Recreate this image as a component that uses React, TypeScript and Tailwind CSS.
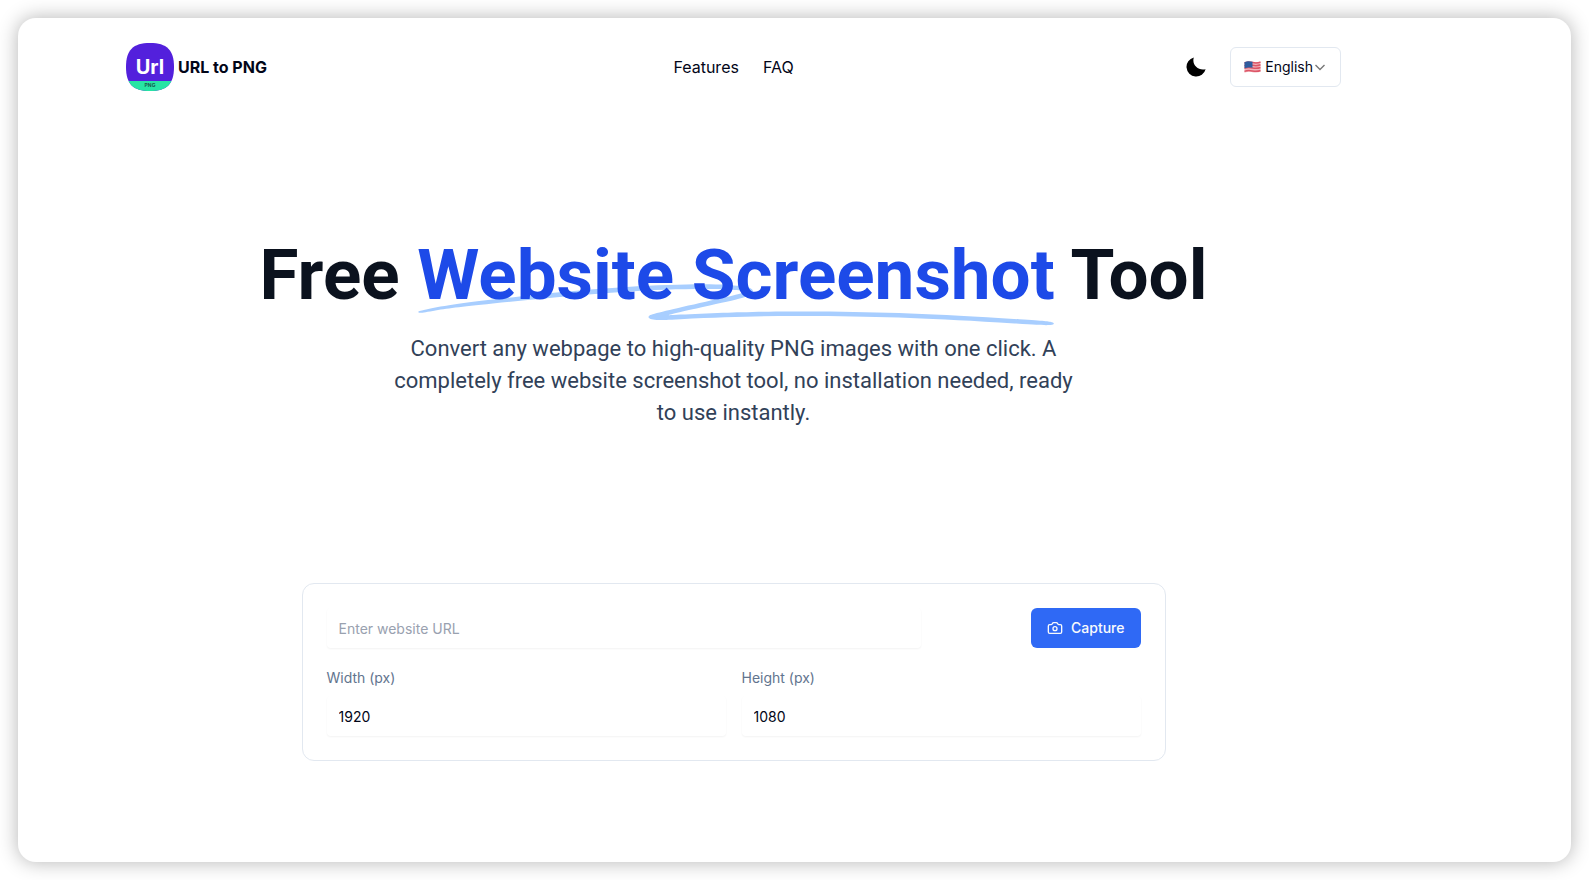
import { useId, useState } from "react";
import { Camera } from "lucide-react";

const navLinks = [
  { label: "Features", href: "#features" },
  { label: "FAQ", href: "#faq" },
];

function Logo() {
  return (
    <svg viewBox="0 0 48 48" className="size-12" aria-hidden="true">
      <defs>
        <clipPath id="logo-shape">
          <path d="M24 0C41 0 48 7 48 24S41 48 24 48 0 41 0 24 7 0 24 0Z" />
        </clipPath>
      </defs>
      <g clipPath="url(#logo-shape)">
        <rect width="48" height="48" fill="#5320dc" />
        <rect y="38" width="48" height="10" fill="#27e5a4" />
      </g>
      <text x="24" y="31" textAnchor="middle" fontSize="20" fontWeight="700" fill="#fff">Url</text>
      <text x="24" y="44" textAnchor="middle" fontSize="5" fontWeight="700" fill="#17604f">PNG</text>
    </svg>
  );
}

function MoonIcon() {
  return (
    <svg viewBox="0 0 20 20" className="size-5" fill="#000" aria-hidden="true">
      <path d="M7.8.4A9.7 9.7 0 1 0 19.6 12.2C12.500 14.200 5.500 8 7.800.4Z" />
    </svg>
  );
}

function FlagIcon() {
  return (
    <svg viewBox="0 0 17 12" className="h-3 w-[17px]" aria-hidden="true">
      <path d="M.5 1.2C4-.2 6 .3 8.5.8S14 1.3 16.500.3V10.800C14 11.800 11 11.700 8.500 11.200S4 10.700.5 11.700Z" fill="#f0b4bc" />
      <path
        d="M.5 2C4 .6 6 1.1 8.5 1.600S14 2.100 16.500 1.100M.5 4.700C4 3.300 6 3.800 8.500 4.300S14 4.800 16.500 3.800M.5 7.400C4 6 6 6.500 8.500 7S14 7.500 16.500 6.500M.5 10.400C4 9 6 9.500 8.500 10S14 10.500 16.500 9.500"
        fill="none"
        stroke="#dd5566"
        strokeWidth="1.5"
      />
      <path d="M.5 1.2C4-.2 6 .3 8.5.8V6.800C6 6.400 4 6.200.5 7.200Z" fill="#2f5c9e" />
    </svg>
  );
}

function ChevronIcon() {
  return (
    <svg viewBox="0 0 14 14" className="size-3.5" fill="none" stroke="#777" strokeWidth="1.4" aria-hidden="true">
      <path d="m2.5 5 4.5 4.5L11.5 5" />
    </svg>
  );
}

function Underline() {
  return (
    <svg
      aria-hidden="true"
      viewBox="0 0 418 42"
      preserveAspectRatio="none"
      className="absolute left-0 top-[62%] h-[0.58em] w-full fill-[#a8ceff]"
    >
      <path d="M203.371.916c-26.013-2.078-76.686 1.963-124.73 9.946L67.3 12.749C35.421 18.062 18.2 21.766 6.004 25.934 1.244 27.561.828 27.778.874 28.61c.07 1.214.828 1.121 9.595-1.176 9.072-2.377 17.15-3.92 39.246-7.496C123.565 7.986 157.869 4.492 195.942 5.046c7.461.108 19.25 1.696 19.17 2.582-.107 1.183-7.874 4.31-25.75 10.366-21.992 7.45-35.43 12.534-36.701 13.884-2.173 2.308-.202 4.407 4.442 4.734 2.654.187 3.263.157 15.593-.78 35.401-2.686 57.944-3.488 88.365-3.143 46.327.526 75.721 2.23 130.788 7.584 19.787 1.924 20.814 1.98 24.557 1.332l.066-.011c1.201-.203 1.53-1.825.399-2.335-2.911-1.31-4.893-1.604-22.048-3.261-57.509-5.556-87.871-7.36-132.059-7.842-23.239-.254-33.617-.116-50.627.674-11.629.54-42.371 2.494-46.696 2.967-2.359.259 8.133-3.625 26.504-9.81 23.239-7.825 27.934-10.149 28.304-14.005.417-4.348-3.529-6-16.878-7.066Z" />
    </svg>
  );
}

function Header() {
  return (
    <header className="flex items-center justify-between pt-[25px]">
      <a href="/" className="flex flex-1 items-center gap-1 font-bold">
        <Logo />
        URL to PNG
      </a>
      <nav className="flex gap-6">
        {navLinks.map((link) => (
          <a key={link.href} href={link.href}>{link.label}</a>
        ))}
      </nav>
      <div className="flex flex-1 items-center justify-end gap-6">
        <button type="button" aria-label="Toggle theme"><MoonIcon /></button>
        <button
          type="button"
          className="flex h-10 items-center rounded-md border border-slate-200 px-[13px] text-sm"
        >
          <FlagIcon />
          <span className="ml-1">English</span>
          <ChevronIcon />
        </button>
      </div>
    </header>
  );
}

function SizeField({ label, value, onChange }: { label: string; value: string; onChange: (v: string) => void }) {
  const id = useId();
  return (
    <div>
      <label htmlFor={id} className="block text-sm text-slate-500">{label}</label>
      <input
        id={id}
        value={value}
        onChange={(e) => onChange(e.target.value)}
        className="mt-2 h-10 w-full rounded-sm px-3 text-sm shadow-xs outline-none"
      />
    </div>
  );
}

function CaptureForm() {
  const [url, setUrl]       = useState("");
  const [width, setWidth]   = useState("1920");
  const [height, setHeight] = useState("1080");

  return (
    <form
      onSubmit={(e) => e.preventDefault()}
      className="mx-auto mt-[154px] max-w-[864px] rounded-xl border border-slate-200 p-6"
    >
      <div className="flex items-center justify-between gap-4">
        <input
          aria-label="Website URL"
          placeholder="Enter website URL"
          value={url}
          onChange={(e) => setUrl(e.target.value)}
          className="h-10 max-w-[594px] flex-1 rounded-sm px-3 text-sm shadow-xs outline-none placeholder:text-gray-400"
        />
        <button
          type="submit"
          className="flex h-10 items-center gap-2 rounded-md bg-[#2f69f5] px-4 text-sm font-medium text-slate-50"
        >
          <Camera size={16} />
          Capture
        </button>
      </div>
      <div className="mt-5 grid grid-cols-2 gap-4">
        <SizeField label="Width (px)" value={width} onChange={setWidth} />
        <SizeField label="Height (px)" value={height} onChange={setHeight} />
      </div>
    </form>
  );
}

export default function App() {
  return (
    <div className="flex min-h-screen flex-col bg-white p-[18px] font-['Inter',sans-serif] text-slate-950">
      <div className="flex-1 rounded-[18px] pr-[122px] pb-20 shadow-[0_0_20px_rgba(0,0,0,0.3)]">
        <div className="mx-auto max-w-[1215px]">
          <Header />
          <main className="pt-[148px]">
            <h1 className="text-center font-['Roboto',sans-serif] text-[71px] leading-[72px] font-bold text-[#0b121e]">
              Free{" "}
              <span className="relative whitespace-nowrap text-[#1d4ae8]">
                <Underline />
                <span className="relative">Website Screenshot</span>
              </span>{" "}
              Tool
            </h1>
            <p className="mx-auto mt-[22px] max-w-[688px] text-center font-['Roboto',sans-serif] text-[22px] leading-8 text-slate-700">
              Convert any webpage to high-quality PNG images with one click. A completely free website
              screenshot tool, no installation needed, ready to use instantly.
            </p>
            <CaptureForm />
          </main>
        </div>
      </div>
    </div>
  );
}
